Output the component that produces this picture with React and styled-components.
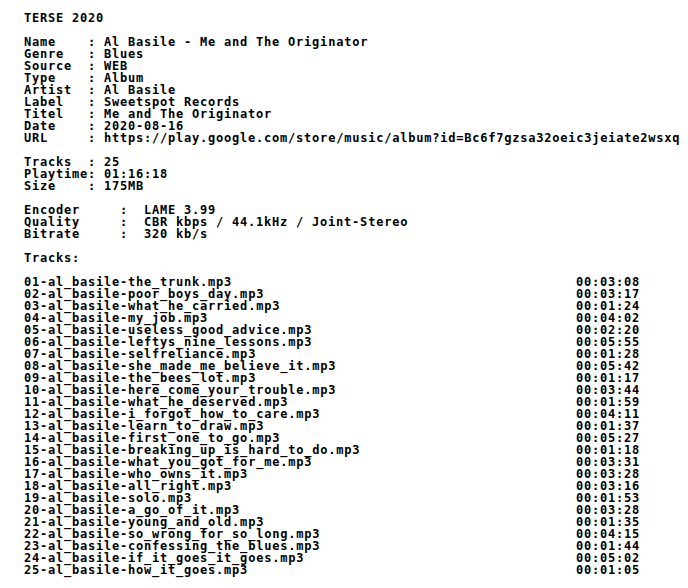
import React from 'react'
import styled, { createGlobalStyle } from 'styled-components'

const CELL = 8 // width of one terminal cell, px

const GlobalStyle = createGlobalStyle`
  html, body {
    margin: 0;
    padding: 0;
    background: #fff;
  }
  body {
    overflow: hidden;
  }
`

const Page = styled.main`
  width: 688px;
  height: 588px;
  box-sizing: border-box;
  padding: 12px 0 0 24px;
  overflow: hidden;
  color: #000;
  font-family: 'DejaVu Sans Mono', 'Liberation Mono', monospace;
  font-weight: bold;
  font-size: 12px;
  letter-spacing: 0.78px;
  line-height: 12px;
  white-space: pre;
`

const Line = styled.div`
  height: 12px;
`

const Block = styled.section`
  margin-bottom: 12px;
`

const Field = styled.div`
  display: flex;
  height: 12px;
`

const Label = styled.span`
  flex: none;
  width: ${(p) => p.$cols * CELL}px;
`

const Sep = styled.span`
  flex: none;
  width: ${(p) => p.$cols * CELL}px;
`

const Value = styled.span``

const TrackRow = styled.div`
  display: grid;
  grid-template-columns: ${69 * CELL}px auto;
  height: 12px;
`

const info = [
  ['Name', 'Al Basile - Me and The Originator'],
  ['Genre', 'Blues'],
  ['Source', 'WEB'],
  ['Type', 'Album'],
  ['Artist', 'Al Basile'],
  ['Label', 'Sweetspot Records'],
  ['Titel', 'Me and The Originator'],
  ['Date', '2020-08-16'],
  ['URL', 'https://play.google.com/store/music/album?id=Bc6f7gzsa32oeic3jeiate2wsxq'],
]

const stats = [
  ['Tracks', '25'],
  ['Playtime', '01:16:18'],
  ['Size', '175MB'],
]

const audio = [
  ['Encoder', 'LAME 3.99'],
  ['Quality', 'CBR kbps / 44.1kHz / Joint-Stereo'],
  ['Bitrate', '320 kb/s'],
]

const tracks = [
  ['the_trunk', '00:03:08'],
  ['poor_boys_day', '00:03:17'],
  ['what_he_carried', '00:01:24'],
  ['my_job', '00:04:02'],
  ['useless_good_advice', '00:02:20'],
  ['leftys_nine_lessons', '00:05:55'],
  ['selfreliance', '00:01:28'],
  ['she_made_me_believe_it', '00:05:42'],
  ['the_bees_lot', '00:01:17'],
  ['here_come_your_trouble', '00:03:44'],
  ['what_he_deserved', '00:01:59'],
  ['i_forgot_how_to_care', '00:04:11'],
  ['learn_to_draw', '00:01:37'],
  ['first_one_to_go', '00:05:27'],
  ['breaking_up_is_hard_to_do', '00:01:18'],
  ['what_you_got_for_me', '00:03:31'],
  ['who_owns_it', '00:03:28'],
  ['all_right', '00:03:16'],
  ['solo', '00:01:53'],
  ['a_go_of_it', '00:03:28'],
  ['young_and_old', '00:01:35'],
  ['so_wrong_for_so_long', '00:04:15'],
  ['confessing_the_blues', '00:01:44'],
  ['if_it_goes_it_goes', '00:05:02'],
  ['how_it_goes', '00:01:05'],
]

function Fields({ rows, labelCols, sepCols }) {
  return (
    <Block>
      {rows.map(([k, v]) => (
        <Field key={k}>
          <Label $cols={labelCols}>{k}</Label>
          <Sep $cols={sepCols}>:</Sep>
          <Value>{v}</Value>
        </Field>
      ))}
    </Block>
  )
}

export default function App() {
  return (
    <>
      <GlobalStyle />
      <Page>
        <Block>
          <Line>TERSE 2020</Line>
        </Block>
        <Fields rows={info} labelCols={8} sepCols={2} />
        <Fields rows={stats} labelCols={8} sepCols={2} />
        <Fields rows={audio} labelCols={12} sepCols={3} />
        <Block>
          <Line>Tracks:</Line>
        </Block>
        {tracks.map(([name, time], i) => {
          const n = String(i + 1).padStart(2, '0')
          return (
            <TrackRow key={n}>
              <span>{`${n}-al_basile-${name}.mp3`}</span>
              <span>{time}</span>
            </TrackRow>
          )
        })}
      </Page>
    </>
  )
}
